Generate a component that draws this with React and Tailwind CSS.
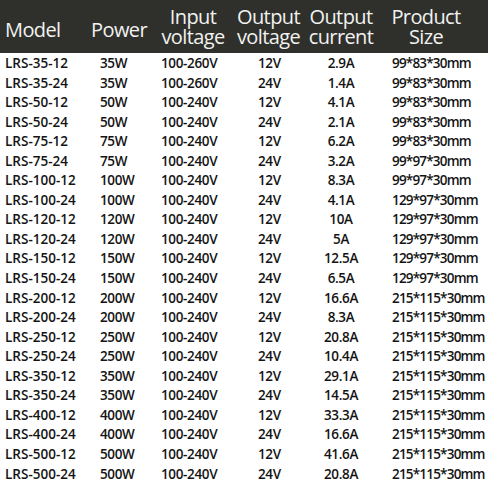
import React from 'react';

const rows = [
  ['LRS-35-12', '35W', '100-260V', '12V', '2.9A', '99*83*30mm'],
  ['LRS-35-24', '35W', '100-260V', '24V', '1.4A', '99*83*30mm'],
  ['LRS-50-12', '50W', '100-240V', '12V', '4.1A', '99*83*30mm'],
  ['LRS-50-24', '50W', '100-240V', '24V', '2.1A', '99*83*30mm'],
  ['LRS-75-12', '75W', '100-240V', '12V', '6.2A', '99*83*30mm'],
  ['LRS-75-24', '75W', '100-240V', '24V', '3.2A', '99*97*30mm'],
  ['LRS-100-12', '100W', '100-240V', '12V', '8.3A', '99*97*30mm'],
  ['LRS-100-24', '100W', '100-240V', '24V', '4.1A', '129*97*30mm'],
  ['LRS-120-12', '120W', '100-240V', '12V', '10A', '129*97*30mm'],
  ['LRS-120-24', '120W', '100-240V', '24V', '5A', '129*97*30mm'],
  ['LRS-150-12', '150W', '100-240V', '12V', '12.5A', '129*97*30mm'],
  ['LRS-150-24', '150W', '100-240V', '24V', '6.5A', '129*97*30mm'],
  ['LRS-200-12', '200W', '100-240V', '12V', '16.6A', '215*115*30mm'],
  ['LRS-200-24', '200W', '100-240V', '24V', '8.3A', '215*115*30mm'],
  ['LRS-250-12', '250W', '100-240V', '12V', '20.8A', '215*115*30mm'],
  ['LRS-250-24', '250W', '100-240V', '24V', '10.4A', '215*115*30mm'],
  ['LRS-350-12', '350W', '100-240V', '12V', '29.1A', '215*115*30mm'],
  ['LRS-350-24', '350W', '100-240V', '24V', '14.5A', '215*115*30mm'],
  ['LRS-400-12', '400W', '100-240V', '12V', '33.3A', '215*115*30mm'],
  ['LRS-400-24', '400W', '100-240V', '24V', '16.6A', '215*115*30mm'],
  ['LRS-500-12', '500W', '100-240V', '12V', '41.6A', '215*115*30mm'],
  ['LRS-500-24', '500W', '100-240V', '24V', '20.8A', '215*115*30mm'],
];

const HeadCell = ({ lines, className = '' }) => (
  <div className={`flex flex-col items-center ${className}`}>
    {lines.map((l) => (
      <span key={l} className="block h-[20px] leading-[20px]">{l}</span>
    ))}
  </div>
);

export default function App() {
  return (
    <div className="w-[488px] h-[488px] overflow-hidden bg-white font-['Open_Sans',sans-serif]">
      <div className="h-[53px] bg-[#2f302c] text-[#f2f2f0] grid grid-cols-[88px_62px_86px_65px_80px_90px] items-center text-[20px] tracking-[-0.6px] pt-[1px]">
        <div className="pl-[5px] pt-[6px] leading-[20px]">Model</div>
        <div className="text-center pt-[6px] leading-[20px]">Power</div>
        <HeadCell lines={['Input', 'voltage']} />
        <HeadCell lines={['Output', 'voltage']} />
        <HeadCell lines={['Output', 'current']} />
        <HeadCell lines={['Product', 'Size']} />
      </div>
      <div className="pt-[1px] text-[#141414] text-[13.5px] font-semibold tracking-[-0.35px]">
        {rows.map((r) => (
          <div key={r[0]} className="h-[19.55px] grid grid-cols-[100px_61px_97px_52px_62px_116px] items-center leading-none">
            <div className="pl-[5px] tracking-normal">{r[0]}</div>
            <div>{r[1]}</div>
            <div>{r[2]}</div>
            <div>{r[3]}</div>
            <div className="text-center">{r[4]}</div>
            <div className="pl-[20px] whitespace-nowrap tracking-[-0.8px]">{r[5]}</div>
          </div>
        ))}
      </div>
    </div>
  );
}
